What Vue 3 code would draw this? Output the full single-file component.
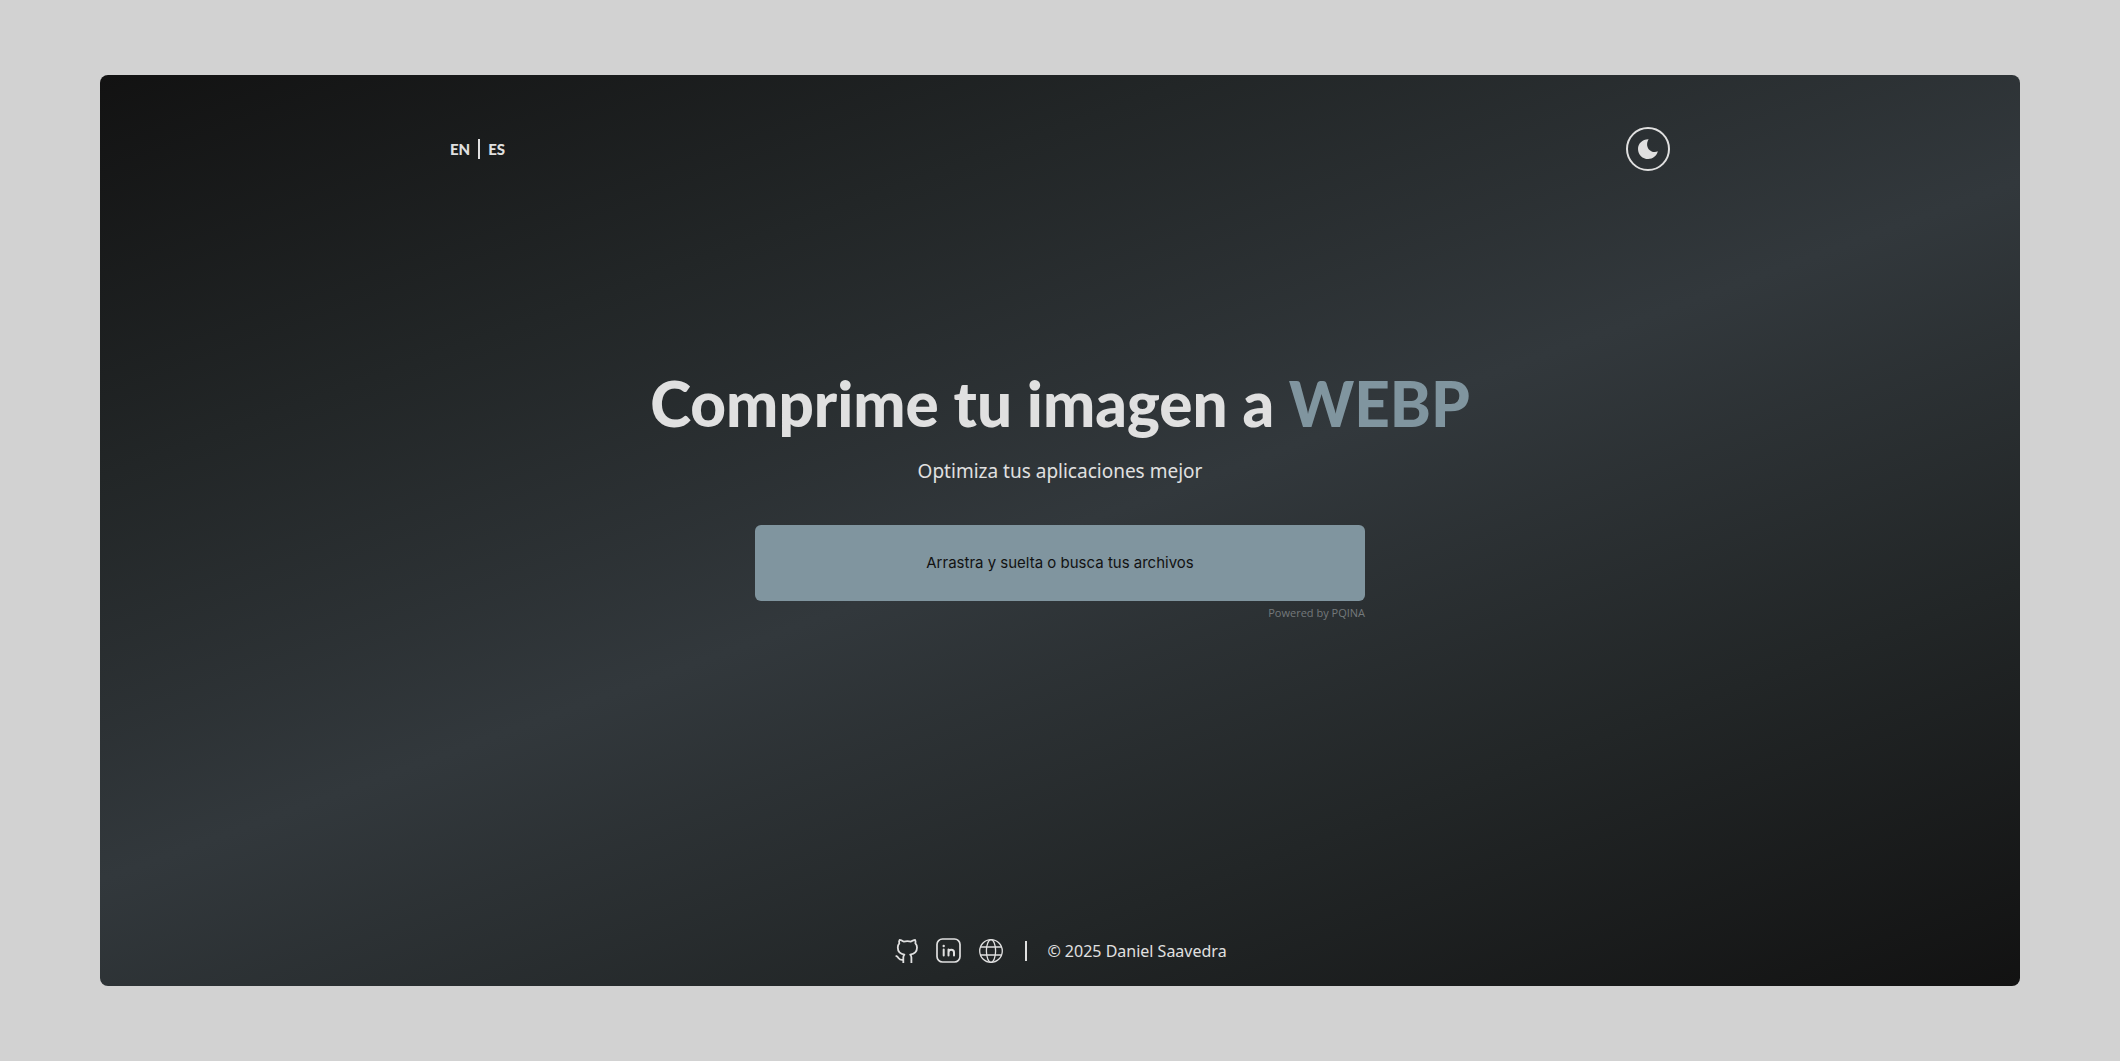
<script setup>
const title = 'Comprime tu imagen a'
</script>

<template>
  <div class="page">
    <div class="card">
      <header class="bar">
        <nav class="langs">
          <a href="#en">EN</a>
          <span class="divider"></span>
          <a href="#es">ES</a>
        </nav>
        <button class="theme" type="button" aria-label="Cambiar tema">
          <svg viewBox="0 0 20 20" width="20" height="20" fill="currentColor">
            <path d="M10.600 0.200C8.200 4 8.700 8.500 11.800 11.200C14.200 13.200 17.200 13.600 19.800 12.300C18.700 16.900 14.900 20 10.200 20C4.600 20 0 15.500 0 9.900C0 4.600 4.300 0.100 10.600 0.200Z" />
          </svg>
        </button>
      </header>

      <main class="hero">
        <h1>{{ title }} <span>WEBP</span></h1>
        <p>Optimiza tus aplicaciones mejor</p>
        <div class="upload">
          <button class="drop" type="button">Arrastra y suelta o busca tus archivos</button>
          <a class="credit" href="#pqina">Powered by PQINA</a>
        </div>
      </main>

      <footer class="foot">
        <a href="#github" aria-label="GitHub">
          <svg viewBox="0 0 28 28" width="28" height="28" fill="none" stroke="currentColor" stroke-width="1.800" stroke-linejoin="round">
            <path d="M10.300 26V20.500C10.300 19.300 10.500 18.500 11.400 17.600C7.500 17 4.800 14.800 4.800 10.600C4.800 8.900 5.300 7.500 6.300 6.400C5.900 5.100 6 3.700 6.700 2.800C8.400 2.900 9.700 3.900 10.700 4.600C13.200 4 15.600 4 18 4.600C19.200 3.800 20.300 2.900 22 2.800C22.700 3.900 22.700 5.100 22.400 6.400C23.500 7.500 24 8.900 24 10.600C24 14.800 21.300 17 17.200 17.600C18.200 18.500 18.400 19.300 18.400 20.500V26" />
            <path d="M10.300 22.800C6.500 23.600 5.800 21.200 4.800 20.200C4.200 19.500 3.500 19.100 2.600 18.900" />
          </svg>
        </a>
        <a href="#linkedin" aria-label="LinkedIn">
          <svg viewBox="0 0 28 28" width="28" height="28" fill="none" stroke="currentColor" stroke-width="1.700" stroke-linecap="round" stroke-linejoin="round">
            <rect x="2" y="2" width="23" height="23" rx="5.500" />
            <path d="M8.700 12.500v6M13.500 18.500v-6M13.500 15.500c0-3.700 5.500-3.700 5.500 0v3" stroke-width="2" />
            <circle cx="8.700" cy="9" r="1.200" fill="currentColor" stroke="none" />
          </svg>
        </a>
        <a href="#web" aria-label="Web">
          <svg viewBox="0 0 28 28" width="28" height="28" fill="none" stroke="currentColor" stroke-width="1.300">
            <circle cx="14" cy="14" r="11.300" />
            <ellipse cx="14" cy="14" rx="4.600" ry="11.300" />
            <path d="M3.500 10h21M3.500 18h21" />
          </svg>
        </a>
        <span class="divider"></span>
        <small>© 2025 Daniel Saavedra</small>
      </footer>
    </div>
  </div>
</template>

<style>
body {
  margin: 0;
  background: #d2d2d2;
}
</style>

<style scoped>
.page {
  box-sizing: border-box;
  min-height: 100vh;
  padding: 75px 100px;
  display: flex;
  font-family: "Noto Sans", sans-serif;
  color: #e0e0e0;
}
.card {
  flex: 1;
  display: flex;
  flex-direction: column;
  border-radius: 8px;
  background: linear-gradient(160deg, #121212, #222627, #32383c, #222627, #121212);
}
.bar {
  box-sizing: border-box;
  width: 100%;
  max-width: 1220px;
  margin: 0 auto;
  padding-top: 52px;
  display: flex;
  justify-content: space-between;
  align-items: center;
}
.langs {
  display: flex;
  align-items: center;
  gap: 8px;
  font: 900 15px/24px Lato, sans-serif;
}
a {
  color: inherit;
  text-decoration: none;
}
.divider {
  width: 2px;
  height: 20px;
  background: currentColor;
}
.theme {
  box-sizing: border-box;
  width: 44px;
  height: 44px;
  padding: 0;
  display: grid;
  place-items: center;
  border: 2px solid currentColor;
  border-radius: 50%;
  background: none;
  color: inherit;
}
.hero {
  flex: 1;
  padding-bottom: 120px;
  display: flex;
  flex-direction: column;
  align-items: center;
  justify-content: center;
}
h1 {
  margin: 0;
  font: 900 62px/72px Lato, sans-serif;
}
h1 span {
  color: #80959f;
}
p {
  margin: 18px 0 40px;
  font: 400 19px/28px "Noto Sans", sans-serif;
}
.upload {
  width: 610px;
  max-width: 100%;
  display: flex;
  flex-direction: column;
}
.drop {
  height: 76px;
  border: 0;
  border-radius: 6px;
  background: #80959f;
  color: #121212;
  font: 400 15px/24px Inter, sans-serif;
}
.credit {
  align-self: flex-end;
  margin-top: 4px;
  font: 400 11px/16px "Open Sans", sans-serif;
  color: #74797b;
}
.foot {
  padding-bottom: 21px;
  display: flex;
  justify-content: center;
  align-items: center;
  gap: 14px;
}
.foot a {
  display: flex;
}
.foot .divider {
  margin: 0 6px;
}
small {
  font-size: 16px;
  line-height: 24px;
}
</style>
